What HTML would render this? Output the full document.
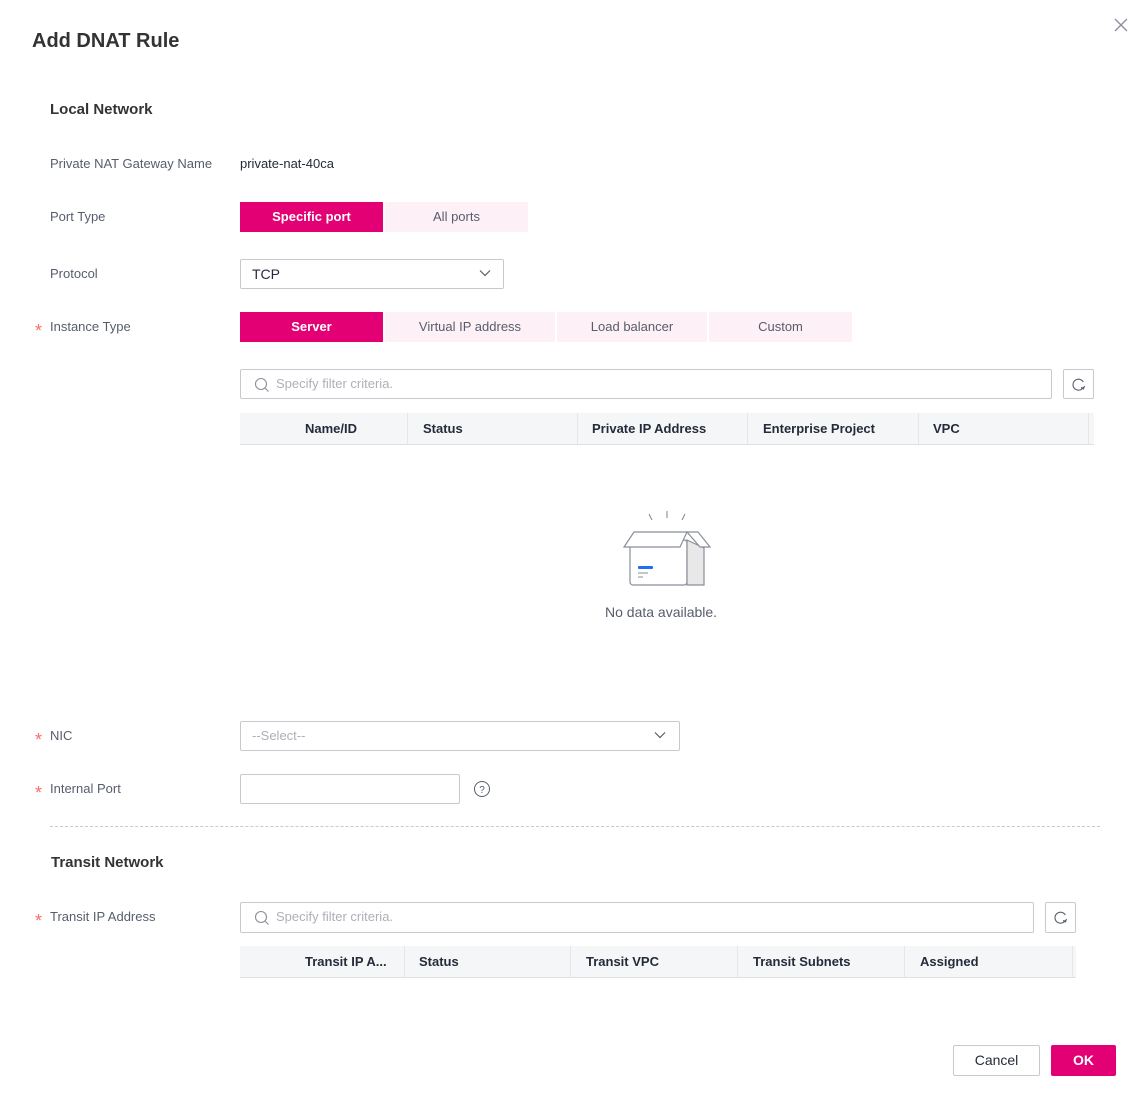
<!DOCTYPE html>
<html><head><meta charset="utf-8"><style>
*{box-sizing:border-box;margin:0;padding:0}
body{width:1131px;height:1099px;background:#fff;font-family:"Liberation Sans",Arial,sans-serif;position:relative;overflow:hidden;color:#252b3a}
.a{position:absolute}
.lbl{position:absolute;left:50px;font-size:13px;color:#575d6c;line-height:16px}
.star{position:absolute;left:35px;color:#f66f6a;font-size:18px;line-height:16px}
.seg{position:absolute;height:30px;line-height:30px;text-align:center;font-size:13px;background:#fdf0f6;color:#575d6c}
.seg.on{background:#e20074;color:#fff;font-weight:bold}
.box{position:absolute;border:1px solid #c7c9cc;border-radius:2px;background:#fff}
.th{position:absolute;height:32px;background:#f5f6f7;border-bottom:1px solid #dfe1e6}
.th span{position:absolute;top:8px;font-size:13px;font-weight:bold;color:#252b3a}
.th i{position:absolute;top:0;width:1px;height:31px;background:#e4e6ea}
.ph{position:absolute;left:35px;top:6px;font-size:13px;color:#adb0b8}
</style></head><body>
<div class="a" style="left:32px;top:30px;font-size:20px;font-weight:bold;color:#333">Add DNAT Rule</div>
<svg class="a" style="left:1114px;top:18px" width="14" height="14" viewBox="0 0 14 14"><path d="M1 1L13 13M13 1L1 13" stroke="#8a8e99" stroke-width="1.3"/></svg>

<div class="a" style="left:50px;top:101px;font-size:15px;font-weight:bold;color:#333">Local Network</div>

<div class="lbl" style="top:156px">Private NAT Gateway Name</div>
<div class="a" style="left:240px;top:156px;font-size:13px">private-nat-40ca</div>

<div class="lbl" style="top:209px">Port Type</div>
<div class="seg on" style="left:240px;top:202px;width:143px">Specific port</div>
<div class="seg" style="left:385px;top:202px;width:143px">All ports</div>

<div class="lbl" style="top:266px">Protocol</div>
<div class="box" style="left:240px;top:259px;width:264px;height:30px"><span class="a" style="left:11px;top:6px;font-size:14px">TCP</span>
<svg class="a" style="left:238px;top:9px" width="12" height="8"><path d="M1 1.5L6 6.5L11 1.5" fill="none" stroke="#575d6c" stroke-width="1.2"/></svg></div>

<div class="star" style="top:323px">*</div>
<div class="lbl" style="top:319px">Instance Type</div>
<div class="seg on" style="left:240px;top:312px;width:143px">Server</div>
<div class="seg" style="left:385px;top:312px;width:170px">Virtual IP address</div>
<div class="seg" style="left:557px;top:312px;width:150px">Load balancer</div>
<div class="seg" style="left:709px;top:312px;width:143px">Custom</div>

<div class="box" style="left:240px;top:369px;width:812px;height:30px">
<svg class="a" style="left:13px;top:7px" width="16" height="16"><circle cx="7" cy="7" r="5.5" fill="none" stroke="#8a8e99" stroke-width="1.1"/><path d="M11 11L14.5 14.5" stroke="#8a8e99" stroke-width="1.1"/></svg>
<span class="ph">Specify filter criteria.</span></div>
<div class="box" style="left:1063px;top:369px;width:31px;height:30px">
<svg class="a" style="left:7px;top:7px" width="16" height="16"><path d="M12.5 10A5.5 5.5 0 1 1 12.3 5" fill="none" stroke="#575d6c" stroke-width="1.1"/><path d="M13.5 9L12.5 11.8L10 10.5" fill="none" stroke="#575d6c" stroke-width="1.1"/></svg></div>

<div class="th" style="left:240px;top:413px;width:854px">
<span style="left:65px">Name/ID</span><i style="left:167px"></i>
<span style="left:183px">Status</span><i style="left:337px"></i>
<span style="left:352px">Private IP Address</span><i style="left:507px"></i>
<span style="left:523px">Enterprise Project</span><i style="left:678px"></i>
<span style="left:693px">VPC</span><i style="left:848px"></i></div>

<svg class="a" style="left:620px;top:508px" width="95" height="82" viewBox="0 0 95 82">
<path d="M29 6L32 12M47 3V10M65 6L62 12" stroke="#8a8e99" stroke-width="1.1"/>
<rect x="10" y="32" width="57" height="45" rx="3" fill="#fff" stroke="#8a8e99" stroke-width="1.2"/>
<path d="M67 32L84 40V77H67Z" fill="#e8e8e8" stroke="#8a8e99" stroke-width="1.2"/>
<path d="M10 39L4 39L14 24L67 24L60 39Z" fill="#fff" stroke="#8a8e99" stroke-width="1.2"/>
<path d="M67 24L78 24L90 39L80 39Z" fill="#fff" stroke="#8a8e99" stroke-width="1.2"/>
<rect x="18" y="58" width="15" height="3" rx="1" fill="#1f6cff"/>
<path d="M18 65H28M18 69H23" stroke="#8a8e99" stroke-width="1"/>
</svg>
<div class="a" style="left:605px;top:604px;font-size:14px;color:#575d6c">No data available.</div>

<div class="star" style="top:732px">*</div>
<div class="lbl" style="top:728px">NIC</div>
<div class="box" style="left:240px;top:721px;width:440px;height:30px"><span class="a" style="left:11px;top:6px;font-size:13px;color:#adb0b8">--Select--</span>
<svg class="a" style="left:413px;top:9px" width="12" height="8"><path d="M1 1.5L6 6.5L11 1.5" fill="none" stroke="#575d6c" stroke-width="1.2"/></svg></div>

<div class="star" style="top:785px">*</div>
<div class="lbl" style="top:781px">Internal Port</div>
<div class="box" style="left:240px;top:774px;width:220px;height:30px"></div>
<svg class="a" style="left:473px;top:780px" width="18" height="18"><circle cx="9" cy="9" r="7.5" fill="none" stroke="#575d6c" stroke-width="1"/><text x="9" y="13" font-size="10" text-anchor="middle" fill="#575d6c" font-family="Liberation Sans">?</text></svg>

<div class="a" style="left:50px;top:826px;width:1050px;border-top:1px dashed #c7c9cc"></div>

<div class="a" style="left:51px;top:854px;font-size:15px;font-weight:bold;color:#333">Transit Network</div>

<div class="star" style="top:913px">*</div>
<div class="lbl" style="top:909px">Transit IP Address</div>
<div class="box" style="left:240px;top:902px;width:794px;height:31px">
<svg class="a" style="left:13px;top:7px" width="16" height="16"><circle cx="7" cy="7" r="5.5" fill="none" stroke="#8a8e99" stroke-width="1.1"/><path d="M11 11L14.5 14.5" stroke="#8a8e99" stroke-width="1.1"/></svg>
<span class="ph">Specify filter criteria.</span></div>
<div class="box" style="left:1045px;top:902px;width:31px;height:31px">
<svg class="a" style="left:7px;top:7px" width="16" height="16"><path d="M12.5 10A5.5 5.5 0 1 1 12.3 5" fill="none" stroke="#575d6c" stroke-width="1.1"/><path d="M13.5 9L12.5 11.8L10 10.5" fill="none" stroke="#575d6c" stroke-width="1.1"/></svg></div>

<div class="th" style="left:240px;top:946px;width:836px">
<span style="left:65px">Transit IP A...</span><i style="left:164px"></i>
<span style="left:179px">Status</span><i style="left:330px"></i>
<span style="left:346px">Transit VPC</span><i style="left:497px"></i>
<span style="left:513px">Transit Subnets</span><i style="left:664px"></i>
<span style="left:680px">Assigned</span><i style="left:832px"></i></div>

<div class="box" style="left:953px;top:1045px;width:87px;height:31px;text-align:center;line-height:29px;font-size:14px;color:#252b3a">Cancel</div>
<div class="a" style="left:1051px;top:1045px;width:65px;height:31px;background:#e20074;border-radius:2px;text-align:center;line-height:31px;font-size:14px;color:#fff;font-weight:bold">OK</div>
</body></html>
